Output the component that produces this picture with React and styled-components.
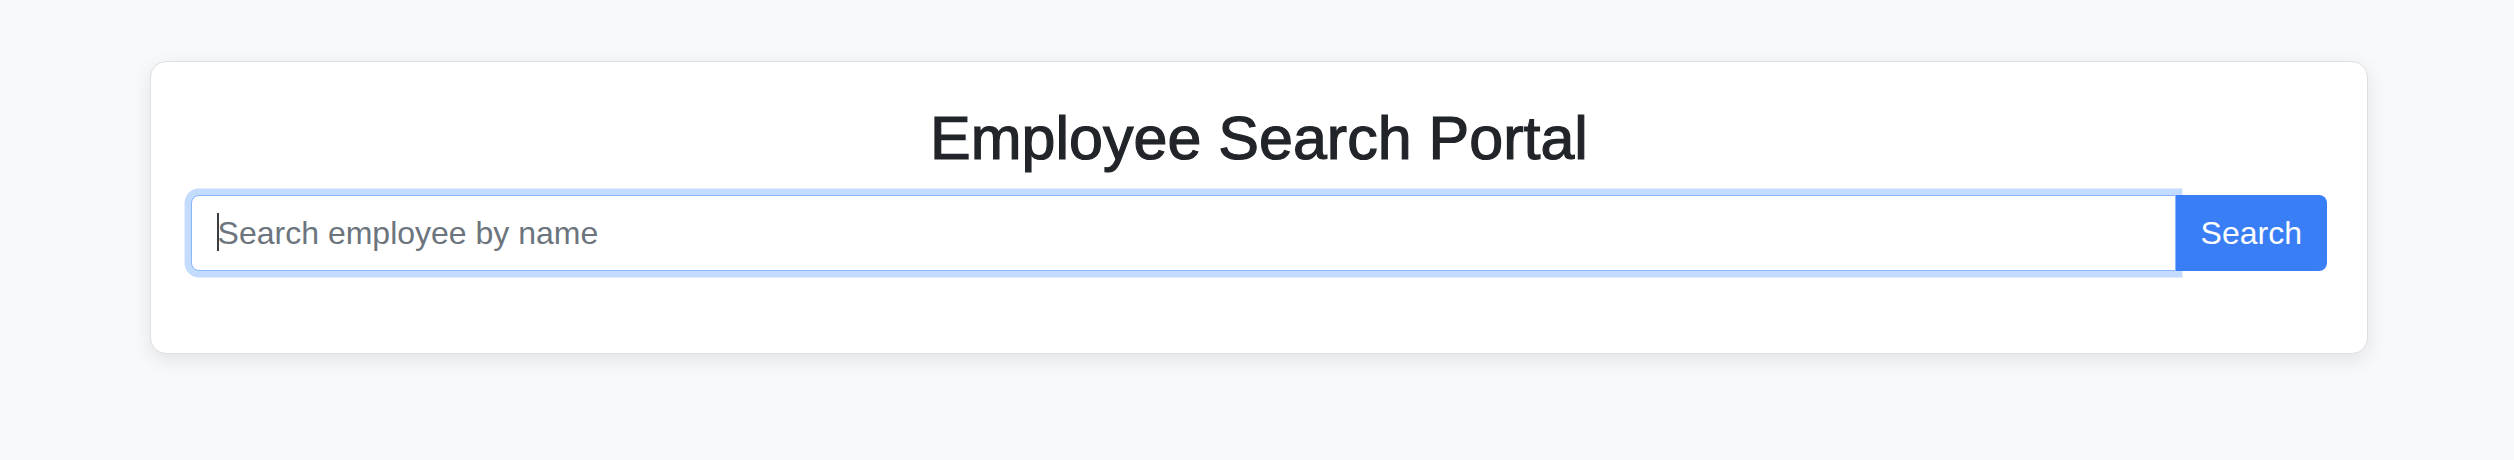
import React from 'react';
import styled, { createGlobalStyle } from 'styled-components';

const GlobalStyle = createGlobalStyle`
  html, body {
    margin: 0;
    padding: 0;
    background: #f8f9fa;
  }

  body {
    font-family: "Liberation Sans", Arial, sans-serif;
    color: #212529;
  }
`;

const Page = styled.div`
  min-height: 460px;
  padding: 61px 146px 0 150px;
  box-sizing: border-box;
`;

const Card = styled.section`
  box-sizing: border-box;
  background: #fff;
  border: 1.5px solid #dddfe2;
  border-radius: 16px;
  padding: 40px 40px 39px;
  box-shadow: 0 6px 20px rgba(0, 0, 0, 0.09);
`;

const Title = styled.h1`
  margin: 0 0 20px;
  text-align: center;
  font-size: 61px;
  line-height: 1.2;
  font-weight: 400;
  color: #212529;
  -webkit-text-stroke: 1.2px #212529;
`;

const InputGroup = styled.div`
  display: flex;
  align-items: stretch;
  height: 76px;
  margin-bottom: 43px;
`;

const Field = styled.div`
  position: relative;
  flex: 1;
  display: flex;
`;

const SearchInput = styled.input`
  flex: 1;
  box-sizing: border-box;
  height: 76px;
  margin: 0;
  padding: 0 25.6px;
  border: 1.6px solid #86b7fe;
  border-radius: 8px 0 0 8px;
  box-shadow: 0 0 0 6.4px #c3dbfd;
  font-family: "Liberation Sans", Arial, sans-serif;
  font-size: 32px;
  color: #212529;
  background: #fff;
  outline: none;

  &::placeholder {
    color: #6c757d;
    opacity: 1;
  }
`;

const Caret = styled.span`
  position: absolute;
  left: 26px;
  top: 18px;
  width: 2px;
  height: 38px;
  background: #3a3d42;
  pointer-events: none;
`;

const Button = styled.button`
  position: relative;
  box-sizing: border-box;
  height: 76px;
  padding: 0 25px;
  border: 0;
  border-radius: 0 8px 8px 0;
  background: #3a7ef6;
  color: #fff;
  font-family: "Liberation Sans", Arial, sans-serif;
  font-size: 32px;
  cursor: pointer;
`;

export default function App() {
  return (
    <>
      <GlobalStyle />
      <Page>
        <Card>
          <Title>Employee Search Portal</Title>
          <InputGroup>
            <Field>
              <SearchInput type="text" placeholder="Search employee by name" />
              <Caret />
            </Field>
            <Button type="button">Search</Button>
          </InputGroup>
        </Card>
      </Page>
    </>
  );
}
